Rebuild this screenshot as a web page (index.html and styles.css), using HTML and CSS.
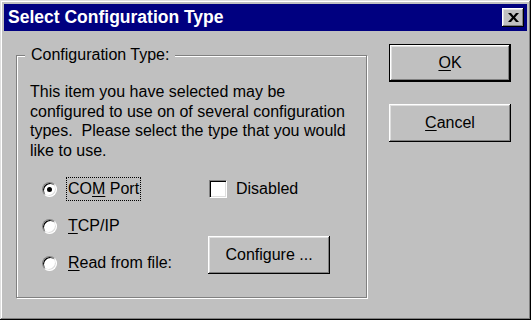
FILE: index.html
```html
<!DOCTYPE html>
<html>
<head>
  <meta charset="UTF-8">
  <title>Select Configuration Type</title>
  <link rel="stylesheet" href="styles.css">
</head>
<body>
  <div class="window">
    <div class="titlebar">
      <span class="title">Select Configuration Type</span>
      <button class="close-btn">
        <svg width="11" height="9" viewBox="0 0 11 9"><path d="M0 0h3l2.5 3 2.5-3h3l-4 4.5 4 4.5h-3l-2.5-3-2.5 3h-3l4-4.5z" fill="#000"/></svg>
      </button>
    </div>

    <div class="dialog">
      <fieldset class="group">
        <legend>Configuration Type:</legend>
        <p class="info">This item you have selected may be<br>configured to use on of several configuration<br>types.&nbsp; Please select the type that you would<br>like to use.</p>

        <div class="options">
          <div class="radios">
            <label class="radio"><span class="dot on"></span><span class="caption focus">CO<u>M</u> Port</span></label>
            <label class="radio"><span class="dot"></span><span class="caption"><u>T</u>CP/IP</span></label>
            <label class="radio"><span class="dot"></span><span class="caption"><u>R</u>ead from file:</span></label>
          </div>
          <div class="extras">
            <label class="check"><span class="box"></span>Disabled</label>
            <button class="btn">Configure ...</button>
          </div>
        </div>
      </fieldset>

      <div class="actions">
        <button class="btn default"><u>O</u>K</button>
        <button class="btn"><u>C</u>ancel</button>
      </div>
    </div>
  </div>
</body>
</html>
```

FILE: styles.css
```css
body { margin: 0; background: #c0c0c0; }
.window { box-sizing: border-box; width: 531px; height: 320px; padding: 4px; background: #c0c0c0; color: #000; font-family: "Liberation Sans", Arial, sans-serif; font-size: 16px; box-shadow: inset -1px -1px #000, inset 1px 1px #dfdfdf, inset -2px -2px #808080, inset 2px 2px #fff; }

.titlebar { display: flex; align-items: center; justify-content: space-between; height: 27px; padding: 0 3px 0 4px; background: #000080; color: #fff; }
.title { font-weight: bold; font-size: 17.5px; }
.close-btn { display: flex; align-items: center; justify-content: center; width: 22px; height: 19px; padding: 0; border: 0; background: #c0c0c0; box-shadow: inset -1px -1px #000, inset 1px 1px #fff, inset -2px -2px #808080, inset 2px 2px #dfdfdf; }

.dialog { display: flex; align-items: flex-start; gap: 22px; padding: 13px 0 0 12px; }

.group { box-sizing: border-box; width: 351px; height: 252px; min-width: 0; margin: 2px 0 0; padding: 18px 13px 0; border: 1px solid #808080; box-shadow: 1px 1px 0 #fff, inset 1px 1px 0 #fff; }
.group legend { margin-left: -5px; padding: 0 6px; line-height: 18px; background: #c0c0c0; }
.info { margin: 0; line-height: 19.5px; }

.options { display: flex; margin-top: 17px; }
.radios { box-sizing: border-box; display: flex; flex-direction: column; gap: 13px; width: 178px; padding-left: 12px; }
.radio { display: flex; align-items: center; gap: 9px; height: 24px; }
.dot { position: relative; box-sizing: border-box; width: 15px; height: 15px; border-radius: 50%; background: #fff; border: 1px solid; border-color: #808080 #fff #fff #808080; box-shadow: inset 1px 1px #000, inset -1px -1px #dfdfdf; }
.dot.on::after { content: ""; position: absolute; left: 4px; top: 4px; width: 5px; height: 5px; border-radius: 50%; background: #000; }
.caption { padding: 0 1px; line-height: 22px; border: 1px dotted transparent; }
.caption.focus { border-color: #000; }

.extras { display: flex; flex-direction: column; align-items: flex-start; }
.check { display: flex; align-items: center; gap: 9px; height: 24px; margin-left: 1px; }
.box { box-sizing: border-box; width: 18px; height: 18px; background: #fff; border: 1px solid; border-color: #808080 #fff #fff #808080; box-shadow: inset 1px 1px #000, inset -1px -1px #dfdfdf; }
.extras .btn { margin-top: 35px; }

.btn { box-sizing: border-box; width: 122px; height: 38px; padding: 0; border: 0; background: #c0c0c0; color: #000; font: inherit; box-shadow: inset -1px -1px #000, inset 1px 1px #fff, inset -2px -2px #808080, inset 2px 2px #dfdfdf; }
.btn.default { border: 1px solid #000; }
.actions { display: flex; flex-direction: column; gap: 22px; }
u { text-underline-offset: 2px; }
```
